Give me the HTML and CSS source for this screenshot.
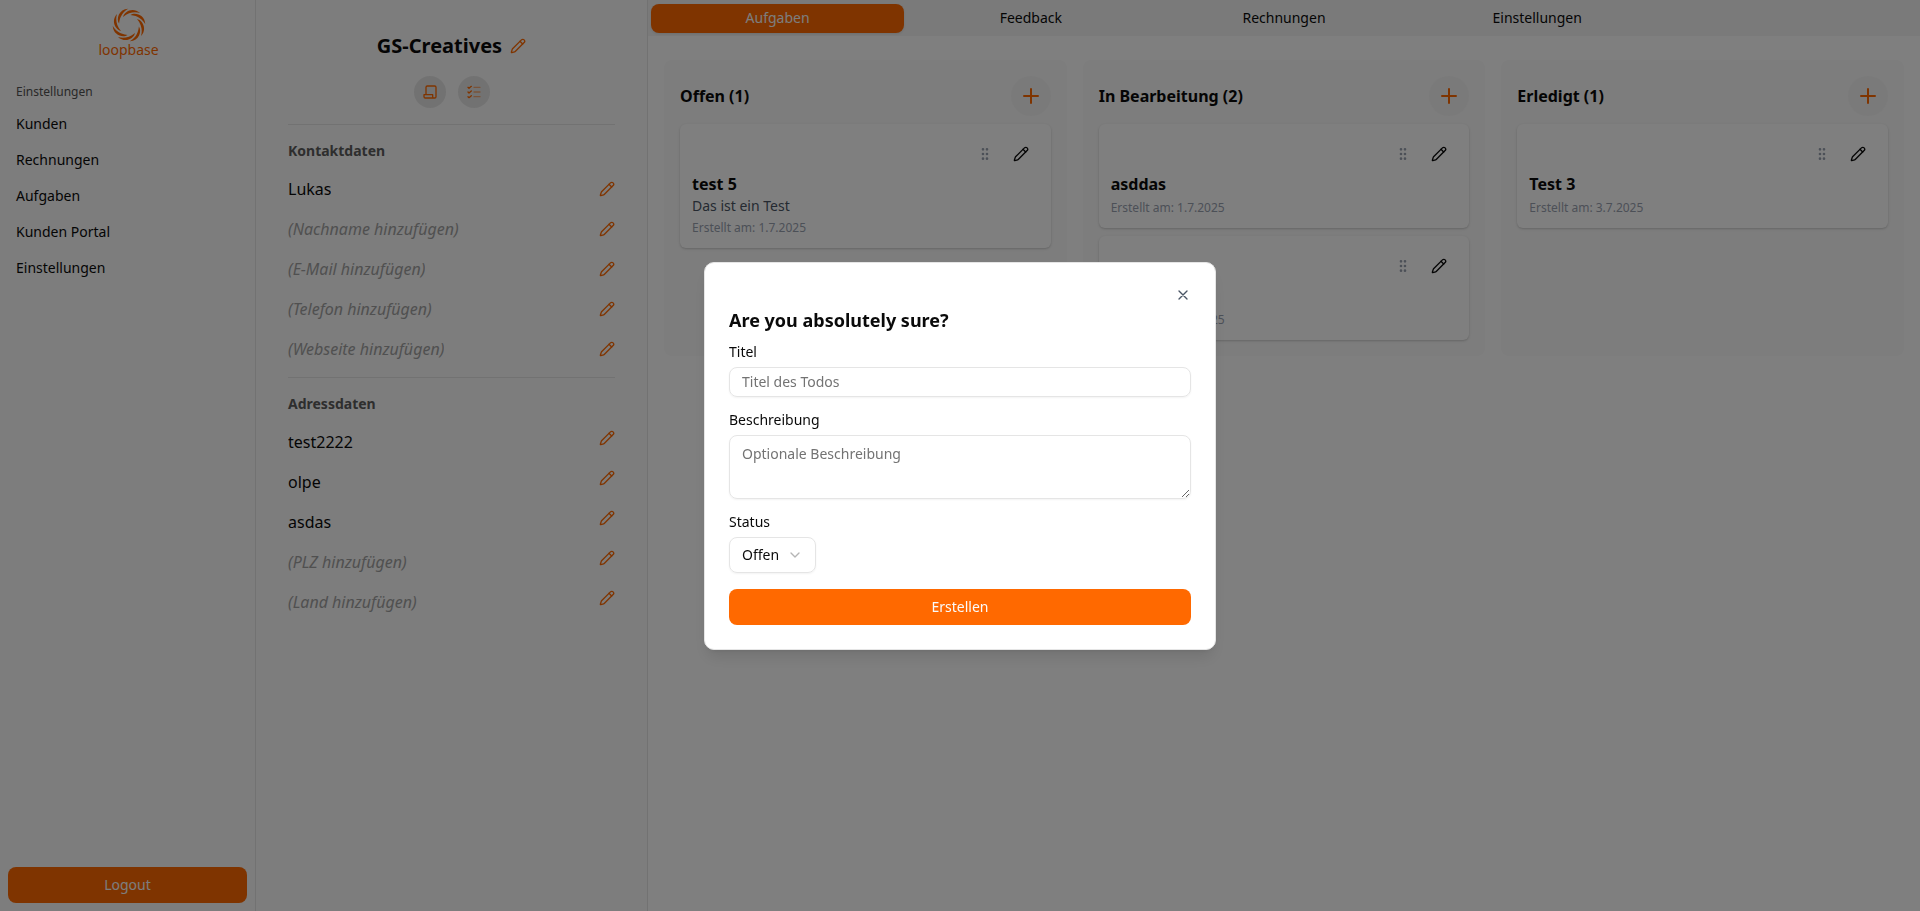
FILE: index.html
```html
<!DOCTYPE html>
<html lang="de">
<head>
  <meta charset="utf-8" />
  <meta name="viewport" content="width=device-width, initial-scale=1" />
  <title>loopbase</title>
  <link rel="stylesheet" href="styles.css">
</head>
<body>
  <svg class="sprite" aria-hidden="true">
    <symbol id="pencil" viewBox="0 0 24 24">
      <path d="M21.174 6.812a1 1 0 0 0-3.986-3.987L3.842 16.174a2 2 0 0 0-.5.83l-1.321 4.352a.5.5 0 0 0 .623.622l4.353-1.32a2 2 0 0 0 .83-.497z" />
      <path d="m15 5 4 4" />
    </symbol>
    <symbol id="grip" viewBox="0 0 24 24">
      <circle cx="9" cy="12" r="1" /><circle cx="9" cy="5" r="1" /><circle cx="9" cy="19" r="1" />
      <circle cx="15" cy="12" r="1" /><circle cx="15" cy="5" r="1" /><circle cx="15" cy="19" r="1" />
    </symbol>
    <symbol id="plus" viewBox="0 0 24 24">
      <path d="M5 12h14M12 5v14" />
    </symbol>
  </svg>

  <div class="app">
    <aside class="sidebar">
      <a class="logo" href="#">
        <svg class="logo-mark" viewBox="-17 -17 34 34" aria-hidden="true">
          <path id="blade" d="M-6 -8C-5 -13.500 4 -18.500 11 -12C6 -13.500 0 -13 -6 -8Z" />
          <use href="#blade" transform="rotate(45)" />
          <use href="#blade" transform="rotate(90)" />
          <use href="#blade" transform="rotate(135)" />
          <use href="#blade" transform="rotate(180)" />
          <use href="#blade" transform="rotate(225)" />
          <use href="#blade" transform="rotate(270)" />
          <use href="#blade" transform="rotate(315)" />
        </svg>
        <span class="logo-text">loopbase</span>
      </a>
      <p class="menu-label">Einstellungen</p>
      <nav class="menu">
        <a href="#">Kunden</a>
        <a href="#">Rechnungen</a>
        <a href="#">Aufgaben</a>
        <a href="#">Kunden Portal</a>
        <a href="#">Einstellungen</a>
      </nav>
      <button type="button" class="btn logout">Logout</button>
    </aside>

    <section class="customer">
      <div class="customer-head">
        <h1>GS-Creatives</h1>
        <button type="button" class="edit" aria-label="Name bearbeiten"><svg class="icon"><use href="#pencil" /></svg></button>
      </div>
      <div class="customer-actions">
        <button type="button" class="round" aria-label="Rechnung">
          <svg class="icon" viewBox="0 0 24 24"><path d="M6 16V5a2 2 0 0 1 2-2h11a2 2 0 0 1 2 2v14a2 2 0 0 1-2 2H5a2 2 0 0 1-2-2v-3h13v3a2 2 0 0 0 2 2" /></svg>
        </button>
        <button type="button" class="round" aria-label="Aufgabe">
          <svg class="icon" viewBox="0 0 24 24">
            <path d="m3 5 1.500 1.500L8 3.500M3 12l1.500 1.500L8 10.500M3 19l1.500 1.500L8 17.500" />
            <path class="faded" d="M12 5h9M12 12h9M12 19h9" />
          </svg>
        </button>
      </div>
      <div class="block">
        <h2>Kontaktdaten</h2>
        <div class="row"><span>Lukas</span><button type="button" class="edit" aria-label="Vorname bearbeiten"><svg class="icon"><use href="#pencil" /></svg></button></div>
        <div class="row"><span class="empty">(Nachname hinzufügen)</span><button type="button" class="edit" aria-label="Nachname bearbeiten"><svg class="icon"><use href="#pencil" /></svg></button></div>
        <div class="row"><span class="empty">(E-Mail hinzufügen)</span><button type="button" class="edit" aria-label="E-Mail bearbeiten"><svg class="icon"><use href="#pencil" /></svg></button></div>
        <div class="row"><span class="empty">(Telefon hinzufügen)</span><button type="button" class="edit" aria-label="Telefon bearbeiten"><svg class="icon"><use href="#pencil" /></svg></button></div>
        <div class="row"><span class="empty">(Webseite hinzufügen)</span><button type="button" class="edit" aria-label="Webseite bearbeiten"><svg class="icon"><use href="#pencil" /></svg></button></div>
      </div>
      <div class="block address">
        <h2>Adressdaten</h2>
        <div class="row"><span>test2222</span><button type="button" class="edit" aria-label="Straße bearbeiten"><svg class="icon"><use href="#pencil" /></svg></button></div>
        <div class="row"><span>olpe</span><button type="button" class="edit" aria-label="Ort bearbeiten"><svg class="icon"><use href="#pencil" /></svg></button></div>
        <div class="row"><span>asdas</span><button type="button" class="edit" aria-label="Region bearbeiten"><svg class="icon"><use href="#pencil" /></svg></button></div>
        <div class="row"><span class="empty">(PLZ hinzufügen)</span><button type="button" class="edit" aria-label="PLZ bearbeiten"><svg class="icon"><use href="#pencil" /></svg></button></div>
        <div class="row"><span class="empty">(Land hinzufügen)</span><button type="button" class="edit" aria-label="Land bearbeiten"><svg class="icon"><use href="#pencil" /></svg></button></div>
      </div>
    </section>

    <main class="content">
      <div class="tabs" role="tablist">
        <button type="button" role="tab" class="tab active" aria-selected="true">Aufgaben</button>
        <button type="button" role="tab" class="tab">Feedback</button>
        <button type="button" role="tab" class="tab">Rechnungen</button>
        <button type="button" role="tab" class="tab">Einstellungen</button>
      </div>
      <div class="board">
        <section class="column">
          <div class="column-head">
            <h2>Offen (1)</h2>
            <button type="button" class="add" aria-label="Hinzufügen"><svg class="icon"><use href="#plus" /></svg></button>
          </div>
          <article class="card">
            <div class="card-tools">
              <button type="button" class="tool grip" aria-label="Verschieben"><svg class="icon"><use href="#grip" /></svg></button>
              <button type="button" class="tool" aria-label="Bearbeiten"><svg class="icon"><use href="#pencil" /></svg></button>
            </div>
            <h3>test 5</h3>
            <p class="desc">Das ist ein Test</p>
            <p class="date">Erstellt am: 1.7.2025</p>
          </article>
        </section>
        <section class="column">
          <div class="column-head">
            <h2>In Bearbeitung (2)</h2>
            <button type="button" class="add" aria-label="Hinzufügen"><svg class="icon"><use href="#plus" /></svg></button>
          </div>
          <article class="card">
            <div class="card-tools">
              <button type="button" class="tool grip" aria-label="Verschieben"><svg class="icon"><use href="#grip" /></svg></button>
              <button type="button" class="tool" aria-label="Bearbeiten"><svg class="icon"><use href="#pencil" /></svg></button>
            </div>
            <h3>asddas</h3>
            <p class="date">Erstellt am: 1.7.2025</p>
          </article>
          <article class="card">
            <div class="card-tools">
              <button type="button" class="tool grip" aria-label="Verschieben"><svg class="icon"><use href="#grip" /></svg></button>
              <button type="button" class="tool" aria-label="Bearbeiten"><svg class="icon"><use href="#pencil" /></svg></button>
            </div>
            <h3>test</h3>
            <p class="date">Erstellt am: 1.7.2025</p>
          </article>
        </section>
        <section class="column">
          <div class="column-head">
            <h2>Erledigt (1)</h2>
            <button type="button" class="add" aria-label="Hinzufügen"><svg class="icon"><use href="#plus" /></svg></button>
          </div>
          <article class="card">
            <div class="card-tools">
              <button type="button" class="tool grip" aria-label="Verschieben"><svg class="icon"><use href="#grip" /></svg></button>
              <button type="button" class="tool" aria-label="Bearbeiten"><svg class="icon"><use href="#pencil" /></svg></button>
            </div>
            <h3>Test 3</h3>
            <p class="date">Erstellt am: 3.7.2025</p>
          </article>
        </section>
      </div>
    </main>
  </div>

  <div class="overlay">
    <form class="dialog" role="dialog" aria-labelledby="dialog-title">
      <div class="dialog-head">
        <button type="button" class="close" aria-label="Schließen">
          <svg class="icon" viewBox="0 0 24 24"><path d="M18 6 6 18M6 6l12 12" /></svg>
        </button>
        <h2 id="dialog-title">Are you absolutely sure?</h2>
      </div>
      <div class="field">
        <label for="titel">Titel</label>
        <input type="text" id="titel" placeholder="Titel des Todos">
      </div>
      <div class="field">
        <label for="beschreibung">Beschreibung</label>
        <textarea id="beschreibung" placeholder="Optionale Beschreibung"></textarea>
      </div>
      <div class="field">
        <label for="status">Status</label>
        <div class="select">
          <select id="status">
            <option>Offen</option>
          </select>
          <svg class="icon" viewBox="0 0 24 24"><path d="m6 9 6 6 6-6" /></svg>
        </div>
      </div>
      <button type="submit" class="btn">Erstellen</button>
    </form>
  </div>
</body>
</html>
```
FILE: styles.css
```css
* {
  box-sizing: border-box;
  margin: 0;
  padding: 0;
}
body {
  font-family: "Noto Sans", sans-serif;
  font-size: 16px;
  line-height: 24px;
  color: #0a0a0a;
  background: #fff;
}
button, input, textarea, select {
  font: inherit;
  color: inherit;
  border: none;
  background: none;
}
a {
  color: inherit;
  text-decoration: none;
}
.sprite {
  position: absolute;
  width: 0;
  height: 0;
}
.icon {
  display: block;
  width: 16px;
  height: 16px;
  fill: none;
  stroke: currentColor;
  stroke-width: 2;
  stroke-linecap: round;
  stroke-linejoin: round;
}
.faded {
  opacity: 0.5;
}
.btn {
  height: 36px;
  border-radius: 8px;
  background: #ff6900;
  color: #fafafa;
  font-size: 14px;
  line-height: 20px;
}
.app {
  display: flex;
  min-height: 100vh;
}

/* sidebar */
.sidebar {
  display: flex;
  flex-direction: column;
  width: 256px;
  padding: 8px;
  background: #fafafa;
  border-right: 1px solid #e5e5e5;
}
.logo {
  display: flex;
  flex-direction: column;
  align-items: center;
  height: 68px;
  padding-left: 2px;
  color: #ff6900;
}
.logo-mark {
  width: 34px;
  height: 34px;
  fill: currentColor;
}
.logo-text {
  font-size: 14px;
  line-height: 16px;
}
.menu-label {
  padding: 8px;
  font-size: 12px;
  line-height: 16px;
  color: #525252;
}
.menu {
  display: flex;
  flex-direction: column;
  gap: 4px;
}
.menu a {
  padding: 6px 8px;
  font-size: 14px;
  line-height: 20px;
}
.logout {
  margin-top: auto;
}

/* customer */
.customer {
  width: 392px;
  padding: 32px;
  background: #fafafa;
  border-right: 1px solid #e5e5e5;
}
.customer-head {
  display: flex;
  justify-content: center;
  align-items: center;
  gap: 8px;
}
.customer-head h1 {
  font-size: 20px;
  font-weight: 700;
  line-height: 28px;
}
.edit {
  color: #ff6900;
}
.customer-actions {
  display: flex;
  justify-content: center;
  gap: 12px;
  margin: 16px 0;
}
.round {
  display: flex;
  justify-content: center;
  align-items: center;
  width: 32px;
  height: 32px;
  border-radius: 50%;
  background: #e5e5e5;
  color: #ff6900;
}
.block {
  display: flex;
  flex-direction: column;
  gap: 16px;
  padding: 16px 0;
  border-top: 1px solid #e5e5e5;
}
.block h2 {
  font-size: 14px;
  font-weight: 700;
  line-height: 20px;
  color: #5c5c5c;
}
.row {
  display: flex;
  justify-content: space-between;
  align-items: center;
}
.row span {
  overflow: hidden;
}
.row .empty {
  font-style: italic;
  color: #a1a1a1;
}
.address .row {
  align-items: flex-start;
}

/* board */
.content {
  flex: 1;
}
.tabs {
  display: grid;
  grid-template-columns: repeat(5, 1fr);
  height: 36px;
  padding: 4px 3px 3px;
  background: #f5f5f5;
}
.tab {
  padding-bottom: 2px;
  border-radius: 8px;
  font-size: 14px;
  line-height: 20px;
}
.tab.active {
  background: #ff6900;
  color: #fafafa;
  box-shadow: 0 1px 3px rgba(0, 0, 0, 0.1);
}
.board {
  display: grid;
  grid-template-columns: repeat(3, 1fr);
  gap: 16px;
  padding: 24px 16px;
}
.column {
  display: flex;
  flex-direction: column;
  gap: 8px;
  padding: 16px;
  border-radius: 8px;
  background: #fafafa;
}
.column-head {
  display: flex;
  justify-content: space-between;
  align-items: center;
}
.column-head h2 {
  font-size: 16px;
  font-weight: 700;
}
.add {
  display: flex;
  justify-content: center;
  align-items: center;
  width: 40px;
  height: 40px;
  border-radius: 50%;
  background: #f5f5f5;
  color: #ff6900;
}
.add .icon {
  width: 24px;
  height: 24px;
}
.card {
  padding: 12px;
  border-radius: 6px;
  background: #fff;
  box-shadow: 0 1px 3px rgba(0, 0, 0, 0.1), 0 1px 2px rgba(0, 0, 0, 0.1);
}
.card-tools {
  display: flex;
  justify-content: flex-end;
}
.tool {
  display: flex;
  justify-content: center;
  align-items: center;
  width: 36px;
  height: 36px;
}
.grip {
  color: #99a1af;
}
.card h3 {
  font-size: 16px;
  font-weight: 700;
}
.desc {
  font-size: 14px;
  line-height: 20px;
  color: #4a5565;
}
.date {
  margin-top: 4px;
  font-size: 12px;
  line-height: 16px;
  color: #99a1af;
}

/* dialog */
.overlay {
  position: fixed;
  inset: 0;
  display: flex;
  justify-content: center;
  align-items: center;
  background: rgba(0, 0, 0, 0.5);
}
.dialog {
  display: flex;
  flex-direction: column;
  gap: 16px;
  width: 100%;
  max-width: 512px;
  padding: 24px;
  border: 1px solid #e5e5e5;
  border-radius: 10px;
  background: #fff;
  box-shadow: 0 10px 15px -3px rgba(0, 0, 0, 0.1), 0 4px 6px -4px rgba(0, 0, 0, 0.1);
}
.dialog-head {
  display: flex;
  flex-direction: column;
  gap: 8px;
}
.dialog-head h2 {
  font-size: 18px;
  font-weight: 700;
  line-height: 18px;
}
.close {
  align-self: flex-end;
  color: #4a5565;
}
.field {
  display: flex;
  flex-direction: column;
  align-items: flex-start;
  gap: 8px;
  font-size: 14px;
}
.field label {
  line-height: 14px;
}
.field input, .field textarea, .field select {
  width: 100%;
  padding: 4px 12px;
  border: 1px solid #e5e5e5;
  border-radius: 8px;
  line-height: 20px;
  box-shadow: 0 1px 2px rgba(0, 0, 0, 0.05);
}
.field input {
  height: 30px;
}
.field textarea {
  display: block;
  height: 64px;
  padding: 8px 12px;
}
::placeholder {
  color: #737373;
}
.select {
  position: relative;
}
.field select {
  height: 36px;
  padding-right: 35px;
  appearance: none;
}
.select .icon {
  position: absolute;
  top: 10px;
  right: 13px;
  color: #b5b5b5;
  pointer-events: none;
}
```
